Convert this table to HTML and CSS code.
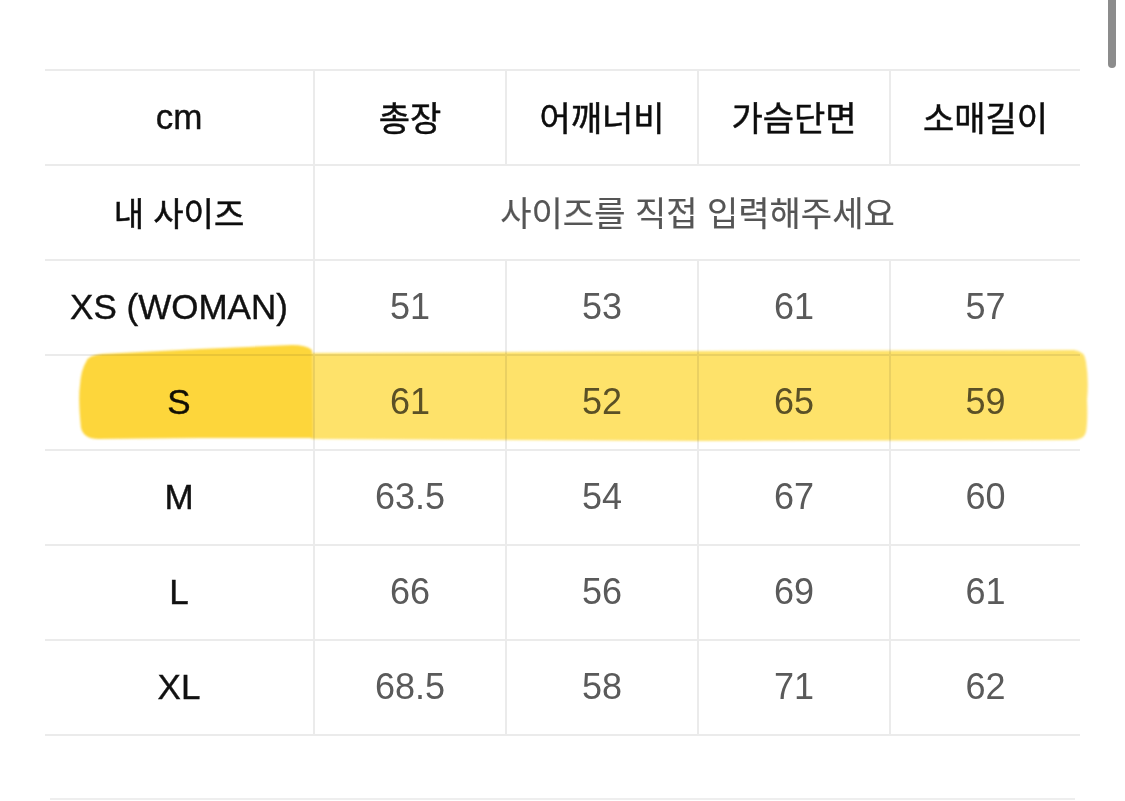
FILE: index.html
```html
<!DOCTYPE html>
<html lang="ko">
<head>
<meta charset="utf-8">
<link rel="stylesheet" href="styles.css">
</head>
<body>
<div class="page">
  <div class="size-table">
    <div class="cell head first">cm</div>
    <div class="cell head ko">총장</div>
    <div class="cell head ko">어깨너비</div>
    <div class="cell head ko">가슴단면</div>
    <div class="cell head ko">소매길이</div>

    <div class="cell head first ko">내 사이즈</div>
    <div class="cell span ko">사이즈를 직접 입력해주세요</div>

    <div class="cell head first">XS (WOMAN)</div>
    <div class="cell val">51</div>
    <div class="cell val">53</div>
    <div class="cell val">61</div>
    <div class="cell val">57</div>

    <div class="cell head first">S</div>
    <div class="cell val">61</div>
    <div class="cell val">52</div>
    <div class="cell val">65</div>
    <div class="cell val">59</div>

    <div class="cell head first">M</div>
    <div class="cell val">63.5</div>
    <div class="cell val">54</div>
    <div class="cell val">67</div>
    <div class="cell val">60</div>

    <div class="cell head first">L</div>
    <div class="cell val">66</div>
    <div class="cell val">56</div>
    <div class="cell val">69</div>
    <div class="cell val">61</div>

    <div class="cell head first">XL</div>
    <div class="cell val">68.5</div>
    <div class="cell val">58</div>
    <div class="cell val">71</div>
    <div class="cell val">62</div>
  </div>
  <div class="next-rule"></div>
</div>

<svg class="highlight" width="1125" height="801" viewBox="0 0 1125 801">
  <defs>
    <filter id="soft" x="-5%" y="-20%" width="110%" height="140%">
      <feGaussianBlur stdDeviation="1.1"/>
    </filter>
  </defs>
  <g filter="url(#soft)">
    <path fill="#fee26a" d="M 311 353 L 700 351 L 1074 350 Q 1085 351 1086 362 Q 1089 380 1087 400 Q 1088 420 1086 432 Q 1084 440 1072 440 L 700 441 L 311 439 Z"/>
    <path fill="#fdd63a" d="M 86 362 Q 88 355 102 354 L 200 349 L 292 345 Q 306 345 312 350 L 313 438 L 200 438 L 98 439 Q 84 439 81 428 Q 78 400 80 385 Q 81 370 86 362 Z"/>
  </g>
</svg>

<div class="scrollbar"></div>
</body>
</html>
```

FILE: styles.css
```css
html, body {
  margin: 0;
  padding: 0;
  background: #ffffff;
}

body {
  position: relative;
  width: 1125px;
  height: 801px;
  overflow: hidden;
  font-family: "Liberation Sans", "Noto Sans CJK KR", sans-serif;
}

.page {
  padding: 69px 45px 0 45px;
}

.size-table {
  display: grid;
  grid-template-columns: 268px 192px 192px 192px 191px;
  grid-auto-rows: 95px;
  width: 1035px;
  border-top: 2px solid #ebebeb;
}

.cell {
  display: flex;
  align-items: center;
  justify-content: center;
  border-bottom: 2px solid #ebebeb;
  border-left: 2px solid #ebebeb;
  box-sizing: border-box;
  font-size: 36px;
  color: #5a5a5a;
  padding-bottom: 2px;
}

.cell.first {
  border-left: none;
}

.cell.head {
  color: #111111;
  font-size: 35px;
  -webkit-text-stroke: 0.4px #111111;
}

.cell.ko {
  font-family: "Noto Sans CJK KR", sans-serif;
  font-size: 34px;
  font-weight: 400;
}

.cell.head.ko {
  color: #0d0d0d;
  font-size: 34px;
  -webkit-text-stroke: 0.5px #0d0d0d;
}

.cell.head.first.ko {
  font-size: 33px;
}

.cell.span {
  grid-column: span 4;
  color: #555555;
  font-size: 34px;
  -webkit-text-stroke: 0.2px #555555;
}

.next-rule {
  margin: 62px 5px 0 5px;
  height: 2px;
  background: #eeeeee;
}

.highlight {
  position: absolute;
  left: 0;
  top: 0;
  pointer-events: none;
  mix-blend-mode: multiply;
}

.scrollbar {
  position: absolute;
  left: 1108px;
  top: 0;
  width: 8px;
  height: 68px;
  background: #8c8c8c;
  border-radius: 0 0 4px 4px;
}
```
